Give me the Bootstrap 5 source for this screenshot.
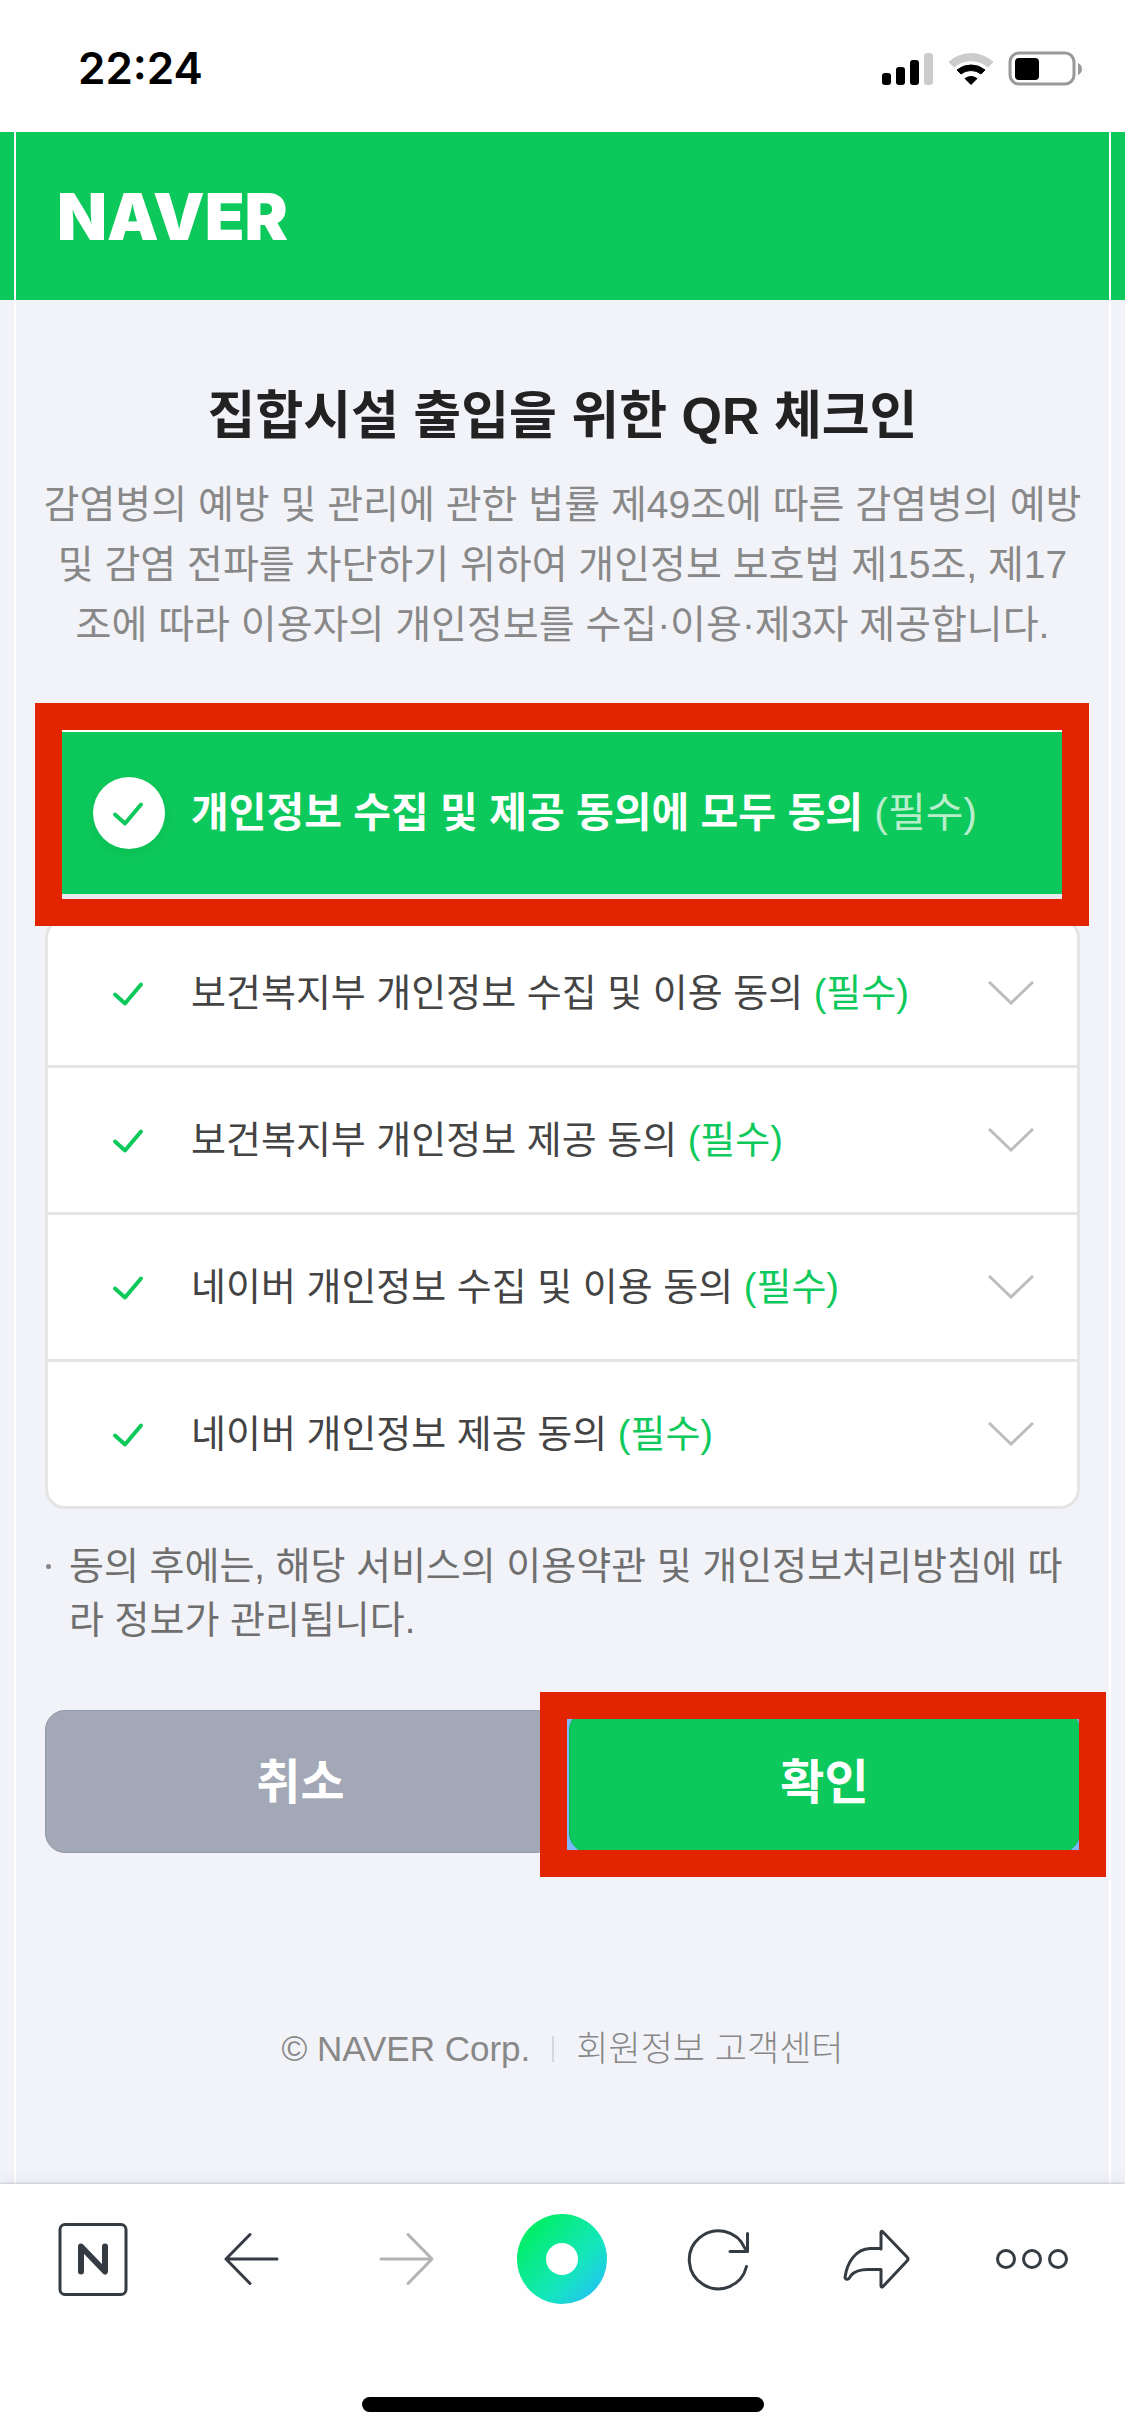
<!DOCTYPE html>
<html lang="ko">
<head>
<meta charset="utf-8">
<meta name="viewport" content="width=device-width, initial-scale=1">
<title>QR 체크인 - NAVER</title>
<link href="https://cdn.jsdelivr.net/npm/bootstrap@5.3.0/dist/css/bootstrap.min.css" rel="stylesheet">
<style>
  :root { --nv-green: #0dc95b; --nv-red: #e22400; --nv-page: #f2f3f8; --nv-line: #e5e5e5; --nv-ink: #353b42; }
  body { font-family: "Liberation Sans", "Noto Sans CJK KR", sans-serif; background: var(--nv-page); color: #444; }
  .status-bar { height: 132px; padding: 0 43px 40px 78px; background: #fefefe; color: #000; }
  .status-time { font: 600 44px/48px Inter, sans-serif; }
  .gutter { padding: 0 14px; }
  .guides { border: solid #fff; border-width: 0 2px; }
  .brand-bar { background: var(--nv-green); }
  .brand-bar .guides { height: 168px; padding: 2px 41px 0; }
  .brand-logo { font: 900 65px/64px Inter, sans-serif; color: #fff; text-decoration: none; }
  .content { padding: 77px 29px 0; }
  .page-title { font-size: 52px; line-height: 78px; font-weight: 700; color: #222; margin: 0 0 20px; text-align: center; }
  .intro { font-size: 39px; line-height: 60px; color: #888; text-align: center; margin: 0 -10px 75px; }
  .framed { position: relative; }
  .framed::after { content: ""; position: absolute; border: 27px solid var(--nv-red); pointer-events: none; }
  .agree-all { background: var(--nv-green); border-top: 2px solid #fff; border-bottom: 5px solid #e9e9f0; height: 169px; padding: 0 48px; margin-bottom: 19px; z-index: 1; }
  .agree-all::after { inset: -29px -9px -32px -10px; }
  .agree-all label { font-size: 41px; line-height: 60px; font-weight: 700; color: #fff; gap: 26px; cursor: pointer; }
  .soft { font-weight: 400; color: #b8eecb; }
  .tick { width: 72px; height: 72px; flex: none; }
  .tick-on { background: #fff; border-radius: 50%; box-shadow: 0 4px 14px rgba(0, 150, 60, .25); }
  .terms { background: #fff; border: 3px solid var(--nv-line); border-radius: 20px; margin: 0 0 30px; padding: 0; list-style: none; }
  .terms li { height: 147px; padding: 0 43px 0 45px; border-bottom: 3px solid var(--nv-line); }
  .terms li:last-child { height: 144px; border-bottom: 0; }
  .terms label { font-size: 38px; line-height: 56px; gap: 26px; cursor: pointer; }
  .need { color: var(--nv-green); }
  .plain { border: 0; background: none; padding: 0; line-height: 0; }
  .note { font-size: 38px; line-height: 54px; color: #6f6f6f; margin: 0 0 63px; padding-left: 24px; position: relative; }
  .note::before { content: ""; position: absolute; left: 1px; top: 25px; width: 5px; height: 5px; border-radius: 50%; background: #888; }
  .actions { gap: 13px; }
  .actions > div { flex: 1 1 0; }
  .btn-act { width: 100%; height: 143px; font-size: 48px; line-height: 60px; font-weight: 700; color: #fff; border-radius: 20px; padding: 2px 0 0; display: block; }
  .btn-act:hover { color: #fff; }
  .btn-cancel, .btn-cancel:hover { background: #a2a8b6; border: 1px solid #9298a9; }
  .btn-ok, .btn-ok:hover { background: var(--nv-green); border: 1px solid #0bb852; }
  .ok-area { background: #7cb8fb; box-shadow: -2px 0 0 #7cb8fb; }
  .ok-area::after { inset: -18px -26px -24px -29px; }
  .site-foot { font-size: 35px; line-height: 42px; font-weight: 300; color: #888; margin-top: 175px; gap: 22px; padding-bottom: 110px; }
  .site-foot a { color: inherit; text-decoration: none; }
  .bar { width: 2px; height: 26px; background: #d6d7db; }
  .toolbar-bottom { background: #fefefe; height: 252px; box-shadow: 0 -1px 2px rgba(60, 60, 90, .2), 0 -4px 14px rgba(60, 60, 120, .06); position: relative; }
  .tools { padding: 30px 15px 0; }
  .tools button { flex: 1 1 0; }
  .home-line { width: 402px; height: 15px; border-radius: 8px; background: #000; margin: 93px auto 0; }
</style>
</head>
<body class="d-flex flex-column min-vh-100">

<svg class="d-none" aria-hidden="true">
  <symbol id="check" viewBox="0 0 72 72"><path d="M22 37.500l10 9 16-19" fill="none" stroke="#0dc95b" stroke-width="4" stroke-linecap="round" stroke-linejoin="round"/></symbol>
  <symbol id="chev" viewBox="0 0 46 24"><path d="M1 1l22 21L45 1" fill="none" stroke="#bdbdbd" stroke-width="3"/></symbol>
</svg>

<div class="status-bar d-flex justify-content-between align-items-end">
  <span class="status-time">22:24</span>
  <svg width="200" height="48" viewBox="0 0 200 48" role="img" aria-label="신호, 와이파이, 배터리">
    <rect x="0" y="29" width="9" height="12" rx="3"/><rect x="14" y="23" width="9" height="18" rx="3"/><rect x="28" y="16" width="9" height="25" rx="3"/><rect x="42" y="9" width="9" height="32" rx="3" fill="#ccc"/>
    <path d="M67 18a33 33 0 0 1 44 0l-5 5a26 26 0 0 0-34 0z" fill="#ccc" stroke="#ccc" stroke-width="1" stroke-linejoin="round"/>
    <path d="M75 26a22 22 0 0 1 28 0l-4 4a16 16 0 0 0-20 0z" stroke="#000" stroke-linejoin="round"/>
    <path d="M83 34.500a11 11 0 0 1 12 0l-6 6z" stroke="#000" stroke-linejoin="round"/>
    <rect x="128" y="9" width="64" height="31" rx="9" fill="none" stroke="#999" stroke-width="3"/><rect x="133" y="14" width="24" height="22" rx="4"/><path d="M196 19q4 2 4 6t-4 6z" fill="#999"/>
  </svg>
</div>

<header class="brand-bar gutter">
  <div class="guides d-flex align-items-center"><a class="brand-logo" href="#">NAVER</a></div>
</header>

<div class="gutter flex-grow-1 d-flex flex-column">
  <div class="guides content flex-grow-1 d-flex flex-column">
    <main>
      <h1 class="page-title">집합시설 출입을 위한 QR 체크인</h1>
      <p class="intro">감염병의 예방 및 관리에 관한 법률 제49조에 따른 감염병의 예방<br>및 감염 전파를 차단하기 위하여 개인정보 보호법 제15조, 제17<br>조에 따라 이용자의 개인정보를 수집·이용·제3자 제공합니다.</p>

      <form>
        <div class="agree-all framed d-flex align-items-center">
          <label class="d-flex align-items-center"><input class="visually-hidden" type="checkbox" checked><svg class="tick tick-on"><use href="#check"/></svg><span>개인정보 수집 및 제공 동의에 모두 동의 <span class="soft">(필수)</span></span></label>
        </div>

        <ul class="terms">
          <li class="d-flex align-items-center justify-content-between">
            <label class="d-flex align-items-center"><input class="visually-hidden" type="checkbox" checked><svg class="tick"><use href="#check"/></svg><span>보건복지부 개인정보 수집 및 이용 동의 <span class="need">(필수)</span></span></label>
            <button type="button" class="plain" aria-label="펼치기"><svg width="46" height="24"><use href="#chev"/></svg></button>
          </li>
          <li class="d-flex align-items-center justify-content-between">
            <label class="d-flex align-items-center"><input class="visually-hidden" type="checkbox" checked><svg class="tick"><use href="#check"/></svg><span>보건복지부 개인정보 제공 동의 <span class="need">(필수)</span></span></label>
            <button type="button" class="plain" aria-label="펼치기"><svg width="46" height="24"><use href="#chev"/></svg></button>
          </li>
          <li class="d-flex align-items-center justify-content-between">
            <label class="d-flex align-items-center"><input class="visually-hidden" type="checkbox" checked><svg class="tick"><use href="#check"/></svg><span>네이버 개인정보 수집 및 이용 동의 <span class="need">(필수)</span></span></label>
            <button type="button" class="plain" aria-label="펼치기"><svg width="46" height="24"><use href="#chev"/></svg></button>
          </li>
          <li class="d-flex align-items-center justify-content-between">
            <label class="d-flex align-items-center"><input class="visually-hidden" type="checkbox" checked><svg class="tick"><use href="#check"/></svg><span>네이버 개인정보 제공 동의 <span class="need">(필수)</span></span></label>
            <button type="button" class="plain" aria-label="펼치기"><svg width="46" height="24"><use href="#chev"/></svg></button>
          </li>
        </ul>

        <p class="note">동의 후에는, 해당 서비스의 이용약관 및 개인정보처리방침에 따라 정보가 관리됩니다.</p>

        <div class="actions d-flex">
          <div><button type="button" class="btn btn-act btn-cancel">취소</button></div>
          <div class="ok-area framed"><button type="submit" class="btn btn-act btn-ok">확인</button></div>
        </div>
      </form>
    </main>

    <footer class="site-foot d-flex justify-content-center align-items-center">
      <a href="#">© NAVER Corp.</a><span class="bar"></span><a href="#">회원정보 고객센터</a>
    </footer>
  </div>
</div>

<nav class="toolbar-bottom" aria-label="브라우저 도구">
  <div class="tools d-flex">
    <button class="plain" aria-label="네이버 홈"><svg width="90" height="90" viewBox="0 0 90 90" fill="none" stroke="#353b42" stroke-linecap="round" stroke-linejoin="round"><rect x="12" y="10.500" width="66" height="70" rx="5" stroke-width="3"/><path d="M33 57.500V32.500L57 57.500V32.500" stroke-width="6"/></svg></button>
    <button class="plain" aria-label="뒤로"><svg width="90" height="90" viewBox="0 0 90 90" fill="none" stroke="#353b42" stroke-width="3" stroke-linecap="round" stroke-linejoin="round"><path d="M72 45H21M45 20.500L21 45l24 24.500"/></svg></button>
    <button class="plain" aria-label="앞으로"><svg width="90" height="90" viewBox="0 0 90 90" fill="none" stroke="#b3b3b3" stroke-width="3" stroke-linecap="round" stroke-linejoin="round"><path d="M20 45h51M47 20.500L71 45 47 69.500"/></svg></button>
    <button class="plain" aria-label="그린닷"><svg width="90" height="90" viewBox="0 0 90 90"><defs><linearGradient id="dot" x1=".1" y1=".15" x2=".88" y2=".88"><stop offset="0" stop-color="#00ee62"/><stop offset=".65" stop-color="#14e6bc"/><stop offset="1" stop-color="#21c6ee"/></linearGradient></defs><circle cx="45" cy="45" r="45" fill="url(#dot)"/><circle cx="45" cy="45" r="16" fill="#fff"/></svg></button>
    <button class="plain" aria-label="새로고침"><svg width="90" height="90" viewBox="0 0 90 90" fill="none" stroke="#353b42" stroke-width="3" stroke-linecap="round" stroke-linejoin="round"><path d="M72.500 52.500A29 29 0 1 1 71 34.500M73.500 19.500V37.500H56"/></svg></button>
    <button class="plain" aria-label="공유"><svg width="90" height="90" viewBox="0 0 90 90" fill="none" stroke="#353b42" stroke-width="3" stroke-linecap="round" stroke-linejoin="round"><path d="M51 35V19q0-3 2-1L77 43q2 2 0 4L53 72.500q-2 1.500-2-1V55.500H38q-12 0-17 6l-2 3q-3 2-4-1C17 48 26 35 40 34.500H51"/></svg></button>
    <button class="plain" aria-label="더보기"><svg width="90" height="90" viewBox="0 0 90 90" fill="none" stroke="#353b42" stroke-width="3"><circle cx="19" cy="45" r="8.500"/><circle cx="45" cy="45" r="8.500"/><circle cx="71" cy="45" r="8.500"/></svg></button>
  </div>
  <div class="home-line"></div>
</nav>

<script src="https://cdn.jsdelivr.net/npm/bootstrap@5.3.0/dist/js/bootstrap.bundle.min.js"></script>
</body>
</html>
